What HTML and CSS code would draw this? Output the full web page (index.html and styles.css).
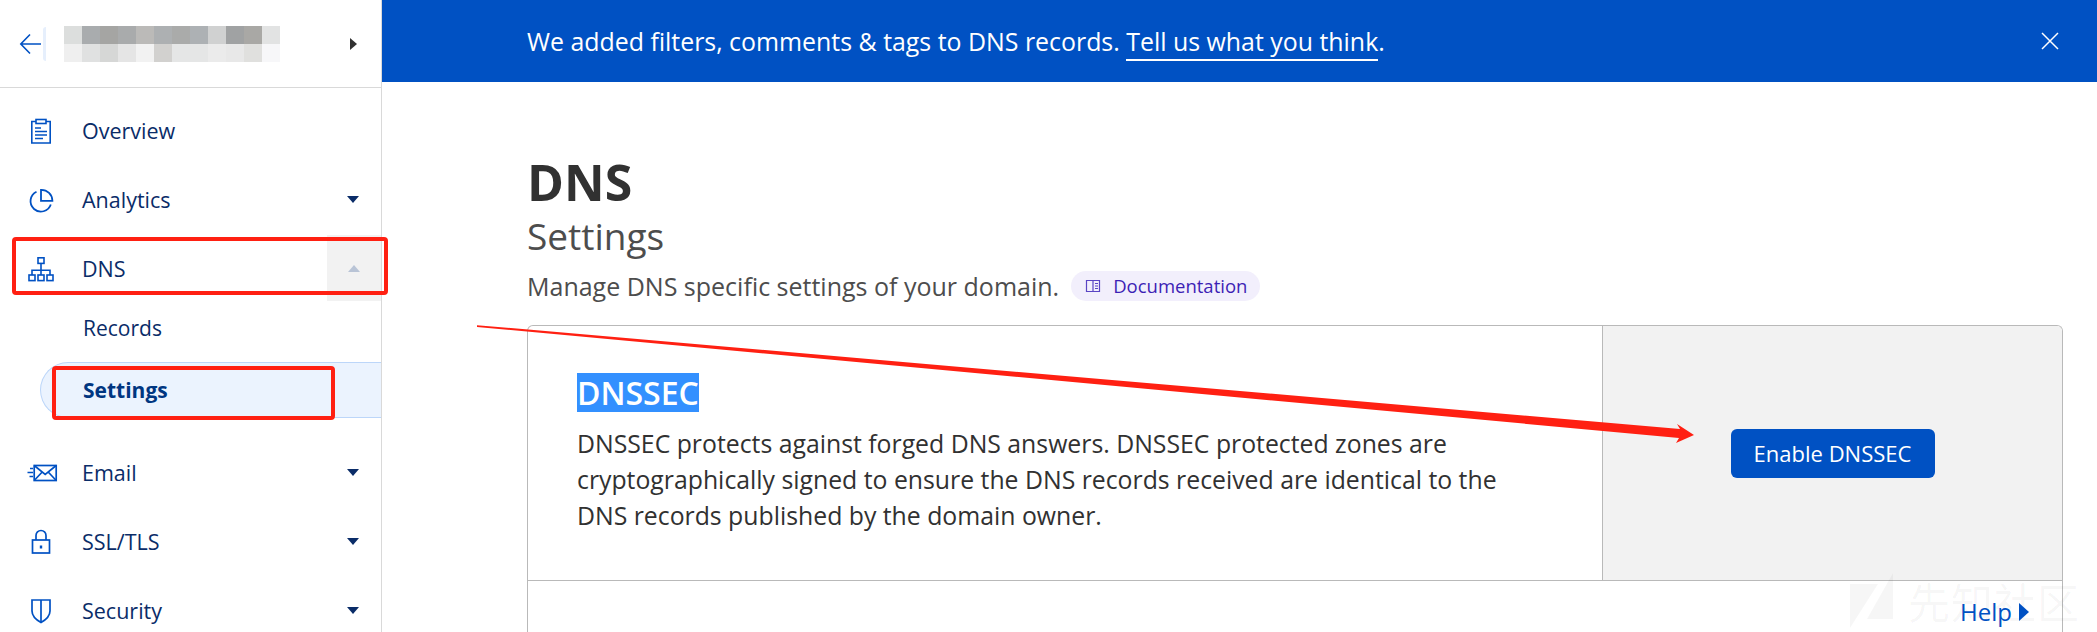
FILE: index.html
```html
<!DOCTYPE html>
<html lang="en">
<head>
    <meta charset="UTF-8">
    <meta name="viewport" content="width=device-width, initial-scale=1.0">
    <title>DNS Settings</title>
    <link rel="stylesheet" href="styles.css">
</head>
<body>
    <div class="page">
        <aside class="sidebar">
            <div class="zone-head">
                <svg class="back-icon" width="24" height="24" viewBox="0 0 24 24" fill="none" stroke="#0051c3" stroke-width="1.6"><path d="M22 12H2M11 2.5 1.8 12l9.2 9.5"/></svg>
                <span class="zone-avatar"></span>
                <!-- blurred zone name -->
                <svg class="zone-name" width="216" height="36" viewBox="0 0 12 2" shape-rendering="crispEdges">
                    <rect x="0" y="0" width="1" height="1" fill="#dcdedd"/>
                    <rect x="1" y="0" width="1" height="1" fill="#a9acae"/>
                    <rect x="2" y="0" width="1" height="1" fill="#a5a5a3"/>
                    <rect x="3" y="0" width="1" height="1" fill="#a9abac"/>
                    <rect x="4" y="0" width="1" height="1" fill="#bbbab8"/>
                    <rect x="5" y="0" width="1" height="1" fill="#adb0b2"/>
                    <rect x="6" y="0" width="1" height="1" fill="#aaabaa"/>
                    <rect x="7" y="0" width="1" height="1" fill="#adb1b4"/>
                    <rect x="8" y="0" width="1" height="1" fill="#d0d1d1"/>
                    <rect x="9" y="0" width="1" height="1" fill="#a0a2a3"/>
                    <rect x="10" y="0" width="1" height="1" fill="#a9a8a5"/>
                    <rect x="11" y="0" width="1" height="1" fill="#e2e3e3"/>
                    <rect x="0" y="1" width="1" height="1" fill="#efefef"/>
                    <rect x="1" y="1" width="1" height="1" fill="#e0e1e1"/>
                    <rect x="2" y="1" width="1" height="1" fill="#d6d7d6"/>
                    <rect x="3" y="1" width="1" height="1" fill="#e5e5e5"/>
                    <rect x="4" y="1" width="1" height="1" fill="#f2f2f2"/>
                    <rect x="5" y="1" width="1" height="1" fill="#d2d1cf"/>
                    <rect x="6" y="1" width="1" height="1" fill="#e5e6e6"/>
                    <rect x="7" y="1" width="1" height="1" fill="#e5e6e6"/>
                    <rect x="8" y="1" width="1" height="1" fill="#ebebeb"/>
                    <rect x="9" y="1" width="1" height="1" fill="#e8e8e8"/>
                    <rect x="10" y="1" width="1" height="1" fill="#e0e0de"/>
                    <rect x="11" y="1" width="1" height="1" fill="#f7f7f9"/>
                </svg>
                <span class="caret-right"></span>
            </div>
            <nav class="nav">
                <a class="nav-item" href="#">
                    <svg class="nav-icon" width="30" height="30" viewBox="0 0 30 30" fill="none" stroke="#0051c3" stroke-width="1.6"><path d="M10 5.500H5.800v21.500h18.400V5.500H20"/><rect x="10" y="3.500" width="10" height="4"/><path d="M9 12h6M9 15.500h12M9 19h12M9 22.500h8"/></svg>
                    <span class="nav-label">Overview</span>
                </a>
                <a class="nav-item" href="#">
                    <svg class="nav-icon" width="30" height="30" viewBox="0 0 30 30" fill="none" stroke="#0051c3" stroke-width="1.8"><path d="M10.500 6.800A10.400 10.400 0 1 0 24.800 19.500"/><path d="M15 4.800a11 11 0 0 1 11.400 11H15z"/></svg>
                    <span class="nav-label">Analytics</span>
                    <span class="caret-down"></span>
                </a>
                <a class="nav-item" href="#">
                    <svg class="nav-icon" width="30" height="30" viewBox="0 0 30 30" fill="none" stroke="#0051c3" stroke-width="1.6"><rect x="12" y="3.800" width="6" height="5.600"/><path d="M15 9.400v6.800M6 21v-4.800h18V21M15 16.200V21"/><rect x="3" y="21" width="6" height="5.600"/><rect x="12" y="21" width="6" height="5.600"/><rect x="21" y="21" width="6" height="5.600"/></svg>
                    <span class="nav-label">DNS</span>
                    <span class="nav-toggle"><span class="caret-up"></span></span>
                </a>
                <a class="sub-item" href="#">Records</a>
                <a class="sub-item sub-item-active" href="#">Settings</a>
                <a class="nav-item nav-item-after-sub" href="#">
                    <svg class="nav-icon nav-icon-wide" width="32" height="30" viewBox="0 0 32 30" fill="none" stroke="#0051c3" stroke-width="1.7"><rect x="8.200" y="7.500" width="22" height="15"/><path d="m8.200 7.500 11 9 11-9M8.200 22.500l8-8.500M30.200 22.500l-8-8.500"/><path d="M4 10.500h3M1.500 14.500h5.500M3.500 18.500h3.500"/></svg>
                    <span class="nav-label">Email</span>
                    <span class="caret-down"></span>
                </a>
                <a class="nav-item" href="#">
                    <svg class="nav-icon" width="30" height="30" viewBox="0 0 30 30" fill="none" stroke="#0051c3" stroke-width="1.7"><rect x="6.500" y="13" width="17" height="13"/><path d="M10 13V8.500a5 5 0 0 1 10 0V13"/><path d="M15 18.500v3" stroke-width="2.400"/></svg>
                    <span class="nav-label">SSL/TLS</span>
                    <span class="caret-down"></span>
                </a>
                <a class="nav-item" href="#">
                    <svg class="nav-icon" width="30" height="30" viewBox="0 0 30 30" fill="none" stroke="#0051c3" stroke-width="1.7"><path d="M6 4h18v11c0 5.500-4.500 9-9 11.500C10.500 24 6 20.500 6 15z"/><path d="M15 4v22"/></svg>
                    <span class="nav-label">Security</span>
                    <span class="caret-down"></span>
                </a>
            </nav>
        </aside>

        <div class="content">
            <div class="banner">
                <span>We added filters, comments &amp; tags to DNS records. <a href="#">Tell us what you think</a>.</span>
                <svg class="banner-close" width="20" height="20" viewBox="0 0 20 20" stroke="#fff" stroke-width="1.500"><path d="m2 2 16 16M18 2 2 18"/></svg>
            </div>
            <main class="main">
                <h1>DNS</h1>
                <h2>Settings</h2>
                <div class="desc">
                    <span>Manage DNS specific settings of your domain.</span>
                    <a class="doc-pill" href="#">
                        <svg width="16" height="16" viewBox="0 0 16 16" fill="none" stroke="#5a45c4" stroke-width="1.200"><path d="M1.500 2.500h13v11h-13zM8 2.500v11M10 5.500h3M10 8h3M10 10.500h3"/></svg>
                        Documentation
                    </a>
                </div>
                <section class="card">
                    <div class="card-row">
                        <div class="card-text">
                            <div><span class="card-title">DNSSEC</span></div>
                            <p>DNSSEC protects against forged DNS answers. DNSSEC protected zones are cryptographically signed to ensure the DNS records received are identical to the DNS records published by the domain owner.</p>
                        </div>
                        <div class="card-action">
                            <button class="btn-primary" type="button">Enable DNSSEC</button>
                        </div>
                    </div>
                </section>
            </main>
        </div>
    </div>

    <!-- things lying over the page -->
    <div class="watermark">
        <svg width="46" height="56" viewBox="0 0 46 56"><path d="M43 0v46H17zM0 11h28L0 55z"/></svg>
        <span>先知社区</span>
    </div>
    <a class="help" href="#">Help<span class="help-caret"></span></a>
    <div class="mark mark-dns"></div>
    <div class="mark mark-settings"></div>
    <svg class="mark-arrow" width="2097" height="632" viewBox="0 0 2097 632"><path d="M477 325.200 1680 429 1677 424 1694 435 1676 443 1679 438 477 327z" fill="#ff2012"/></svg>
</body>
</html>
```

FILE: styles.css
```css
/* page */
html, body {
    margin: 0;
    height: 100%;
    overflow: hidden;
    background: #fff;
}

body {
    font-family: "Open Sans", "Noto Sans", Arial, sans-serif;
    color: #313131;
}

a {
    text-decoration: none;
}

.page {
    display: flex;
    height: 632px;
}

/* sidebar */
.sidebar {
    width: 381px;
    flex: none;
    border-right: 1px solid #d9d9d9;
}

.zone-head {
    display: flex;
    align-items: center;
    height: 87px;
    padding-left: 19px;
    border-bottom: 1px solid #d9d9d9;
}

.back-icon {
    flex: none;
}

.zone-avatar {
    width: 3px;
    height: 34px;
    background: #e6effc;
    border-radius: 3px 0 0 3px;
    flex: none;
}

.zone-name {
    margin-left: 18px;
    flex: none;
}

.caret-right {
    margin-left: 70px;
    border-left: 7px solid #313131;
    border-top: 6px solid transparent;
    border-bottom: 6px solid transparent;
}

.nav {
    display: flex;
    flex-direction: column;
    padding-top: 8px;
}

.nav-item {
    display: flex;
    align-items: center;
    height: 69px;
    padding-left: 26px;
    color: #0a2c68;
    font-size: 21.5px;
}

.nav-icon {
    flex: none;
    margin-right: 26px;
}

.nav-icon-wide {
    margin-right: 24px;
}

.nav-label {
    flex: 1;
}

.caret-down {
    margin-right: 22px;
    border-top: 7px solid #0a2c68;
    border-left: 6.500px solid transparent;
    border-right: 6.500px solid transparent;
}

.nav-toggle {
    display: flex;
    align-items: center;
    justify-content: center;
    align-self: flex-end;
    width: 54px;
    height: 66px;
    margin-bottom: 2px;
    background: #f2f2f2;
}

.caret-up {
    border-bottom: 7px solid #b9c4d6;
    border-left: 6.500px solid transparent;
    border-right: 6.500px solid transparent;
}

.sub-item {
    display: flex;
    align-items: center;
    height: 50px;
    padding-left: 83px;
    color: #0a2c68;
    font-size: 21px;
}

.sub-item-active {
    height: 54px;
    margin: 9px 0 0 40px;
    padding-left: 42px;
    font-weight: 700;
    color: #003681;
    background: #ebf3fe;
    border: 1px solid #bcd6f9;
    border-right: 0;
    border-radius: 28px 0 0 28px;
}

.nav-item-after-sub {
    margin-top: 20px;
}

/* content */
.content {
    flex: 1;
    display: flex;
    flex-direction: column;
    min-width: 0;
}

.banner {
    display: flex;
    align-items: center;
    justify-content: space-between;
    height: 82px;
    flex: none;
    padding: 0 37px 0 145px;
    background: #0051c3;
    color: #fff;
    font-size: 24.900px;
}

.banner a {
    color: #fff;
    border-bottom: 2px solid #fff;
    padding-bottom: 1px;
}

.main {
    flex: 1;
    display: flex;
    flex-direction: column;
    padding: 70px 34px 0 145px;
    min-height: 0;
}

h1 {
    margin: 0;
    font-size: 50px;
    line-height: 60px;
    font-weight: 700;
    color: #313131;
}

h2 {
    margin: 2px 0 0;
    font-size: 37px;
    line-height: 44px;
    font-weight: 400;
    color: #4d4d4d;
}

.desc {
    display: flex;
    align-items: center;
    gap: 12px;
    margin-top: 13px;
    font-size: 25px;
    line-height: 30px;
    color: #4d4d4d;
}

.doc-pill {
    display: flex;
    align-items: center;
    gap: 12px;
    height: 30px;
    padding: 0 13px 0 14px;
    background: #f2effc;
    border-radius: 15px;
    color: #3d1fb5;
    font-size: 18.500px;
}

/* card */
.card {
    flex: 1;
    margin-top: 24px;
    border: 1px solid #b9b9b9;
    border-bottom: 0;
    border-radius: 6px 6px 0 0;
    overflow: hidden;
}

.card-row {
    display: flex;
    height: 254px;
    border-bottom: 1px solid #b9b9b9;
}

.card-text {
    flex: 1;
    padding: 47px 80px 0 49px;
    border-right: 1px solid #b9b9b9;
}

.card-title {
    display: inline-block;
    line-height: 39px;
    font-size: 32px;
    font-weight: 600;
    color: #fff;
    background: #3390ff;
}

.card-text p {
    margin: 13px 0 0;
    font-size: 24.800px;
    line-height: 36px;
    color: #313131;
}

.card-action {
    display: flex;
    align-items: center;
    justify-content: center;
    width: 459px;
    flex: none;
    background: #f2f2f2;
}

.btn-primary {
    width: 204px;
    height: 49px;
    padding: 0;
    border: 0;
    border-radius: 6px;
    background: #0051c3;
    color: #fff;
    font-family: inherit;
    font-size: 22px;
    cursor: pointer;
}

/* floating bits */
.help {
    position: absolute;
    left: 1960px;
    top: 595px;
    display: flex;
    align-items: center;
    gap: 7px;
    font-size: 24px;
    line-height: 34px;
    color: #0051c3;
}

.help-caret {
    border-left: 10px solid #0051c3;
    border-top: 9px solid transparent;
    border-bottom: 9px solid transparent;
}

.watermark {
    position: absolute;
    left: 1850px;
    top: 573px;
    display: flex;
    align-items: center;
    gap: 12px;
    font-family: "Noto Sans CJK SC", sans-serif;
    font-size: 42px;
    letter-spacing: 1px;
    line-height: 56px;
    color: rgba(0, 0, 0, .04);
}

.watermark svg {
    fill: rgba(0, 0, 0, .035);
}

.mark {
    position: absolute;
    box-sizing: border-box;
    border: 4px solid #ff2012;
    border-radius: 4px;
}

.mark-dns {
    left: 12px;
    top: 237px;
    width: 376px;
    height: 58px;
}

.mark-settings {
    left: 52px;
    top: 366px;
    width: 283px;
    height: 54px;
}

.mark-arrow {
    position: absolute;
    left: 0;
    top: 0;
    pointer-events: none;
}
```
